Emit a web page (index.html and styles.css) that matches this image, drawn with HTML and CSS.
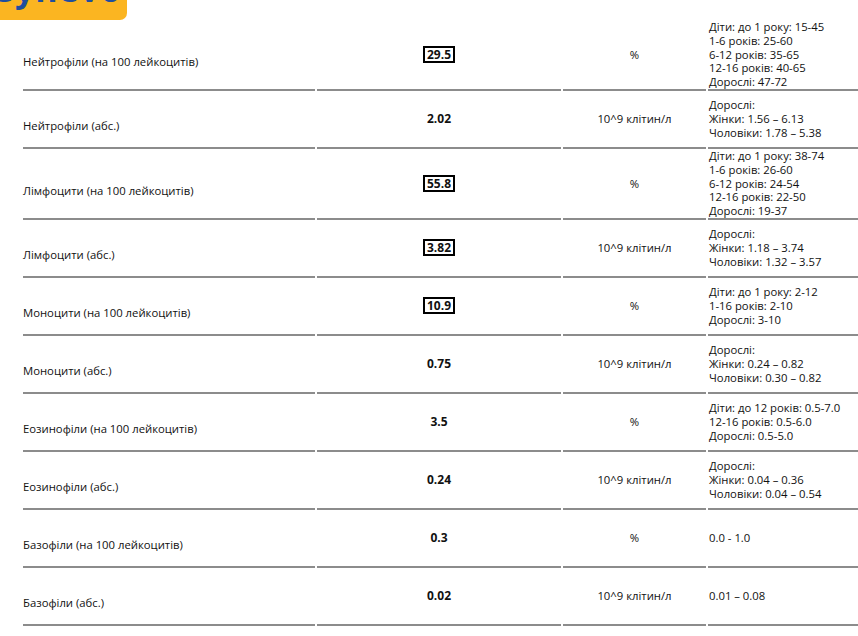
FILE: index.html
```html
<!DOCTYPE html>
<html lang="uk">
<head>
<meta charset="utf-8">
<title>Результати аналізу</title>
<link rel="stylesheet" href="styles.css">
</head>
<body>
<div class="page">
  <div class="logo"><span class="logo-text">synevo</span></div>
  <div class="results">
    <div class="row">
      <div class="cell name">Нейтрофіли (на 100 лейкоцитів)</div>
      <div class="cell value"><b class="flag">29.5</b></div>
      <div class="cell unit">%</div>
      <div class="cell ref"><div>Діти: до 1 року: 15-45<br>1-6 років: 25-60<br>6-12 років: 35-65<br>12-16 років: 40-65<br>Дорослі: 47-72</div></div>
    </div>
    <div class="row">
      <div class="cell name">Нейтрофіли (абс.)</div>
      <div class="cell value"><b>2.02</b></div>
      <div class="cell unit">10^9 клітин/л</div>
      <div class="cell ref"><div>Дорослі:<br>Жінки: 1.56 – 6.13<br>Чоловіки: 1.78 – 5.38</div></div>
    </div>
    <div class="row">
      <div class="cell name">Лімфоцити (на 100 лейкоцитів)</div>
      <div class="cell value"><b class="flag">55.8</b></div>
      <div class="cell unit">%</div>
      <div class="cell ref"><div>Діти: до 1 року: 38-74<br>1-6 років: 26-60<br>6-12 років: 24-54<br>12-16 років: 22-50<br>Дорослі: 19-37</div></div>
    </div>
    <div class="row">
      <div class="cell name">Лімфоцити (абс.)</div>
      <div class="cell value"><b class="flag">3.82</b></div>
      <div class="cell unit">10^9 клітин/л</div>
      <div class="cell ref"><div>Дорослі:<br>Жінки: 1.18 – 3.74<br>Чоловіки: 1.32 – 3.57</div></div>
    </div>
    <div class="row">
      <div class="cell name">Моноцити (на 100 лейкоцитів)</div>
      <div class="cell value"><b class="flag">10.9</b></div>
      <div class="cell unit">%</div>
      <div class="cell ref"><div>Діти: до 1 року: 2-12<br>1-16 років: 2-10<br>Дорослі: 3-10</div></div>
    </div>
    <div class="row">
      <div class="cell name">Моноцити (абс.)</div>
      <div class="cell value"><b>0.75</b></div>
      <div class="cell unit">10^9 клітин/л</div>
      <div class="cell ref"><div>Дорослі:<br>Жінки: 0.24 – 0.82<br>Чоловіки: 0.30 – 0.82</div></div>
    </div>
    <div class="row">
      <div class="cell name">Еозинофіли (на 100 лейкоцитів)</div>
      <div class="cell value"><b>3.5</b></div>
      <div class="cell unit">%</div>
      <div class="cell ref"><div>Діти: до 12 років: 0.5-7.0<br>12-16 років: 0.5-6.0<br>Дорослі: 0.5-5.0</div></div>
    </div>
    <div class="row">
      <div class="cell name">Еозинофіли (абс.)</div>
      <div class="cell value"><b>0.24</b></div>
      <div class="cell unit">10^9 клітин/л</div>
      <div class="cell ref"><div>Дорослі:<br>Жінки: 0.04 – 0.36<br>Чоловіки: 0.04 – 0.54</div></div>
    </div>
    <div class="row">
      <div class="cell name">Базофіли (на 100 лейкоцитів)</div>
      <div class="cell value"><b>0.3</b></div>
      <div class="cell unit">%</div>
      <div class="cell ref"><div>0.0 - 1.0</div></div>
    </div>
    <div class="row">
      <div class="cell name">Базофіли (абс.)</div>
      <div class="cell value"><b>0.02</b></div>
      <div class="cell unit">10^9 клітин/л</div>
      <div class="cell ref"><div>0.01 – 0.08</div></div>
    </div>
  </div>
</div>
</body>
</html>
```

FILE: styles.css
```css
html, body {
  margin: 0;
  padding: 0;
  background: #fff;
  overflow: hidden;
}
body {
  font-family: "Open Sans", "DejaVu Sans", sans-serif;
  font-size: 11.3px;
  color: #111;
}
.page {
  width: 858px;
  height: 636px;
  overflow: hidden;
}
.logo {
  width: 127px;
  height: 60px;
  margin-top: -40px;
  background: #fbb521;
  border-radius: 0 0 7px 0;
  overflow: hidden;
  display: flex;
  align-items: flex-end;
}
.logo-text {
  flex: none;
  font-family: "Open Sans", sans-serif;
  font-weight: 700;
  font-size: 34px;
  line-height: 34px;
  color: #1f4e9e;
  margin: 0 0 14px -3px;
  letter-spacing: 1px;
}
.results {
  margin-left: 23px;
}
.row {
  display: grid;
  grid-template-columns: 292px 244px 143px 1fr;
  column-gap: 2px;
}
.cell {
  box-sizing: border-box;
  min-height: 58px;
  border-bottom: 2px solid #8c8c8c;
  display: flex;
  align-items: center;
  line-height: 13.8px;
}
.name {
  padding-top: 14px;
}
.value, .unit {
  justify-content: center;
}
.value b {
  font-weight: 700;
  font-size: 12px;
}
.flag {
  border: 2px solid #000;
  padding: 0 2px;
  line-height: 13px;
}
.ref {
  padding-left: 1px;
}
```
